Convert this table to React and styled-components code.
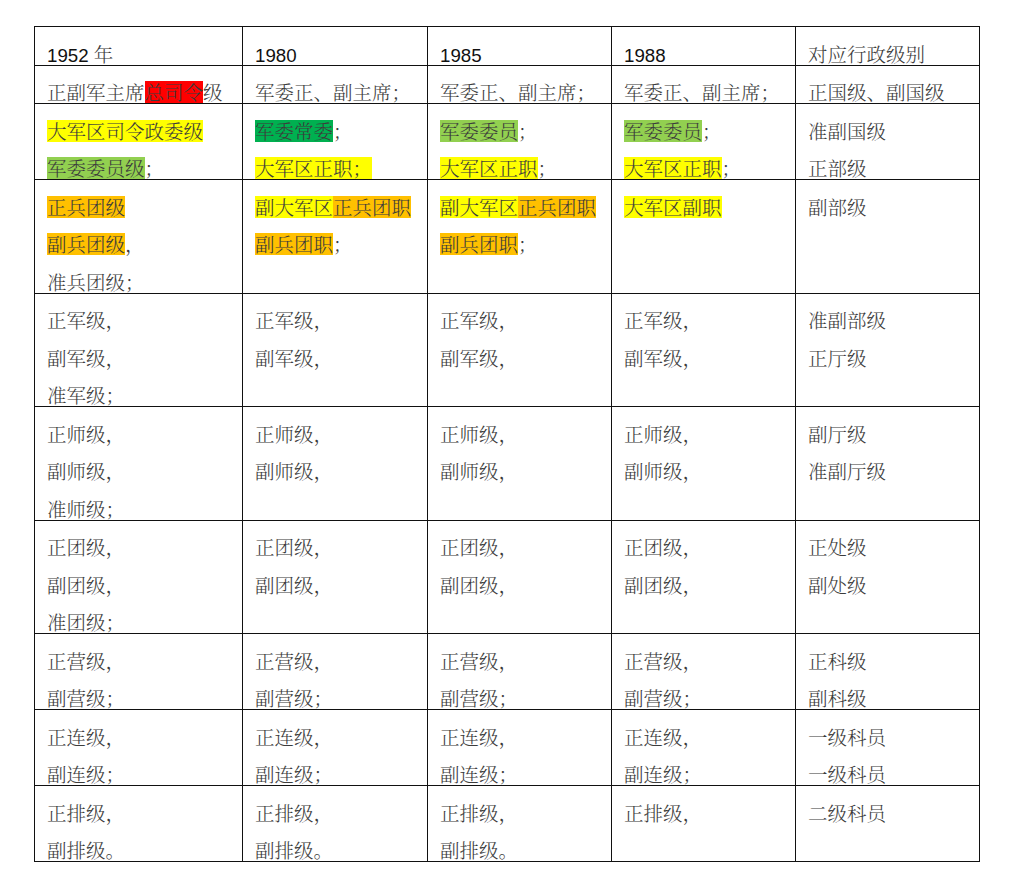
import React from 'react';
import styled, { createGlobalStyle } from 'styled-components';

const GlobalStyle = createGlobalStyle`
    html, body {
        margin: 0;
        padding: 0;
        background: #fff;
    }
`;

const Page = styled.div`
    padding: 26px 0 0 34px;
    width: 1016px;
    height: 875px;
    box-sizing: border-box;
    background: #fff;
`;

const RankTable = styled.table`
    border-collapse: collapse;
    table-layout: fixed;
    width: 946px;
`;

const Cell = styled.td`
    width: ${props => props.width};
    border: 1px solid #111;
    padding: 0 0 0 12px;
    vertical-align: top;
    box-sizing: border-box;
`;

const Line = styled.div`
    display: flex;
    align-items: flex-end;
    height: 37.5px;
    white-space: pre;
`;

const Seg = styled.span`
    display: inline-block;
    line-height: 22px;
    height: 22px;
    font-family: 'Noto Serif CJK SC', 'Noto Sans CJK SC', sans-serif;
    font-weight: 300;
    font-size: 19.5px;
    color: #3c3c3c;
    background: ${props => props.mark || 'transparent'};
`;

const Num = styled.span`
    display: inline-block;
    line-height: 18px;
    font-family: 'Liberation Sans', Arial, sans-serif;
    font-size: 18.7px;
    color: #111;
`;

const Y = '#ffff00';
const G = '#92d050';
const DG = '#00b050';
const O = '#ffc000';
const R = '#ff0000';

const widths = ['208px', '185px', '184px', '184px', '184px'];

// each cell: list of lines, each line: list of [text, highlight]
const rows = [
    [
        [[['正副军主席'], ['总司令', R], ['级']]],
        [[['军委正、副主席；']]],
        [[['军委正、副主席；']]],
        [[['军委正、副主席；']]],
        [[['正国级、副国级']]],
    ],
    [
        [[['大军区司令政委级', Y]], [['军委委员级', G], ['；']]],
        [[['军委常委', DG], ['；']], [['大军区正职；', Y]]],
        [[['军委委员', G], ['；']], [['大军区正职', Y], ['；']]],
        [[['军委委员', G], ['；']], [['大军区正职', Y], ['；']]],
        [[['准副国级']], [['正部级']]],
    ],
    [
        [[['正兵团级', O]], [['副兵团级', O], ['，']], [['准兵团级；']]],
        [[['副大军区', Y], ['正兵团职', O]], [['副兵团职', O], ['；']]],
        [[['副大军区', Y], ['正兵团职', O]], [['副兵团职', O], ['；']]],
        [[['大军区副职', Y]]],
        [[['副部级']]],
    ],
];

const simple = (lines) => lines.map(t => [[t]]);

const ladder = [
    { a: ['正军级，', '副军级，', '准军级；'], b: ['正军级，', '副军级，'], e: ['准副部级', '正厅级'] },
    { a: ['正师级，', '副师级，', '准师级；'], b: ['正师级，', '副师级，'], e: ['副厅级', '准副厅级'] },
    { a: ['正团级，', '副团级，', '准团级；'], b: ['正团级，', '副团级，'], e: ['正处级', '副处级'] },
    { a: ['正营级，', '副营级；'], b: ['正营级，', '副营级；'], e: ['正科级', '副科级'] },
    { a: ['正连级，', '副连级；'], b: ['正连级，', '副连级；'], e: ['一级科员', '一级科员'] },
    { a: ['正排级，', '副排级。'], b: ['正排级，', '副排级。'], d: ['正排级，'], e: ['二级科员'] },
];

ladder.forEach(r => {
    rows.push([
        simple(r.a),
        simple(r.b),
        simple(r.b),
        simple(r.d || r.b),
        simple(r.e),
    ]);
});

const headers = ['1980', '1985', '1988'];

export default function App() {
    return (
        <Page>
            <GlobalStyle />
            <RankTable>
                <tbody>
                    <tr>
                        <Cell width={widths[0]}>
                            <Line><Num>1952 </Num><Seg>年</Seg></Line>
                        </Cell>
                        {headers.map((h, i) => (
                            <Cell key={h} width={widths[i + 1]}>
                                <Line><Num>{h}</Num></Line>
                            </Cell>
                        ))}
                        <Cell width={widths[4]}>
                            <Line><Seg>对应行政级别</Seg></Line>
                        </Cell>
                    </tr>
                    {rows.map((row, ri) => (
                        <tr key={ri}>
                            {row.map((cell, ci) => (
                                <Cell key={ci} width={widths[ci]}>
                                    {cell.map((line, li) => (
                                        <Line key={li}>
                                            {line.map(([text, mark], si) => (
                                                <Seg key={si} mark={mark}>{text}</Seg>
                                            ))}
                                        </Line>
                                    ))}
                                </Cell>
                            ))}
                        </tr>
                    ))}
                </tbody>
            </RankTable>
        </Page>
    );
}
